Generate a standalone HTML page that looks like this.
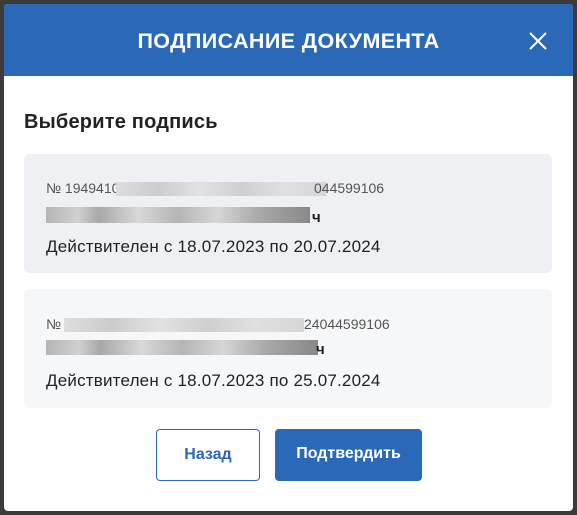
<!DOCTYPE html>
<html><head><meta charset="utf-8"><style>
*{margin:0;padding:0;box-sizing:border-box}
body{width:577px;height:515px;background:#3b3b3b;font-family:"Liberation Sans",sans-serif;position:relative;overflow:hidden}
.dlg{position:absolute;left:4px;top:4px;width:569px;height:507px;background:#fff;border-radius:4px;overflow:hidden}
.hd{position:absolute;left:0;top:0;width:569px;height:72px;background:#2a68b8;color:#fff;font-weight:bold;font-size:21.5px;text-align:center;line-height:74px;letter-spacing:0.4px}
.x{position:absolute;left:524px;top:27px}
h2{position:absolute;left:20px;top:107px;font-size:20px;color:#222;font-weight:bold;letter-spacing:0.2px}
.card{position:absolute;left:20px;width:528px;height:119px;border-radius:5px}
.t{position:absolute;left:22px;font-size:14px;color:#555}
.d{position:absolute;left:22px;font-size:17px;color:#222;letter-spacing:0.2px}
.blur{position:absolute;height:14px;background:linear-gradient(90deg,#ddd,#ccc 20%,#e2e2e2 40%,#cfcfcf 60%,#e0e0e0 80%,#d6d6d6)}
.nm{position:absolute;left:22px;height:16px;background:linear-gradient(90deg,#b5b5b5,#d0d0d0 12%,#a8a8a8 20%,#d8d8d8 35%,#b5b5b5 50%,#d6d6d6 65%,#aaa 80%,#888)}
.btn{position:absolute;top:425px;height:52px;border-radius:4px;font-weight:bold;font-size:16px;text-align:center;line-height:50px}
</style></head><body>
<div class="dlg">
<div class="hd">ПОДПИСАНИЕ ДОКУМЕНТА</div>
<svg class="x" width="20" height="20" viewBox="0 0 20 20"><path d="M2 2L18 18M18 2L2 18" stroke="#fff" stroke-width="2"/></svg>
<h2>Выберите подпись</h2>
<div class="card" style="top:150px;background:#eef0f3">
<div class="t" style="top:26px">№ 1949410</div>
<div class="blur" style="left:92px;top:28px;width:210px"></div>
<div class="t" style="top:26px;left:290px">044599106</div>
<div class="nm" style="top:53px;width:264px"></div>
<div class="d" style="top:55px;left:288px;font-weight:bold;font-size:15px">ч</div>
<div class="d" style="top:83px">Действителен с 18.07.2023 по 20.07.2024</div>
</div>
<div class="card" style="top:285px;background:#f6f7f9">
<div class="t" style="top:27px">№</div>
<div class="blur" style="left:40px;top:29px;width:240px"></div>
<div class="t" style="top:27px;left:280px">24044599106</div>
<div class="nm" style="top:51px;width:272px;height:15px"></div>
<div class="d" style="top:52px;left:292px;font-weight:bold;font-size:15px">ч</div>
<div class="d" style="top:82px">Действителен с 18.07.2023 по 25.07.2024</div>
</div>
<div class="btn" style="left:152px;width:104px;border:1.5px solid #2a68b8;color:#2a68b8;background:#fff">Назад</div>
<div class="btn" style="left:271px;width:147px;background:#2a68b8;color:#fff">Подтвердить</div>
</div>
</body></html>
